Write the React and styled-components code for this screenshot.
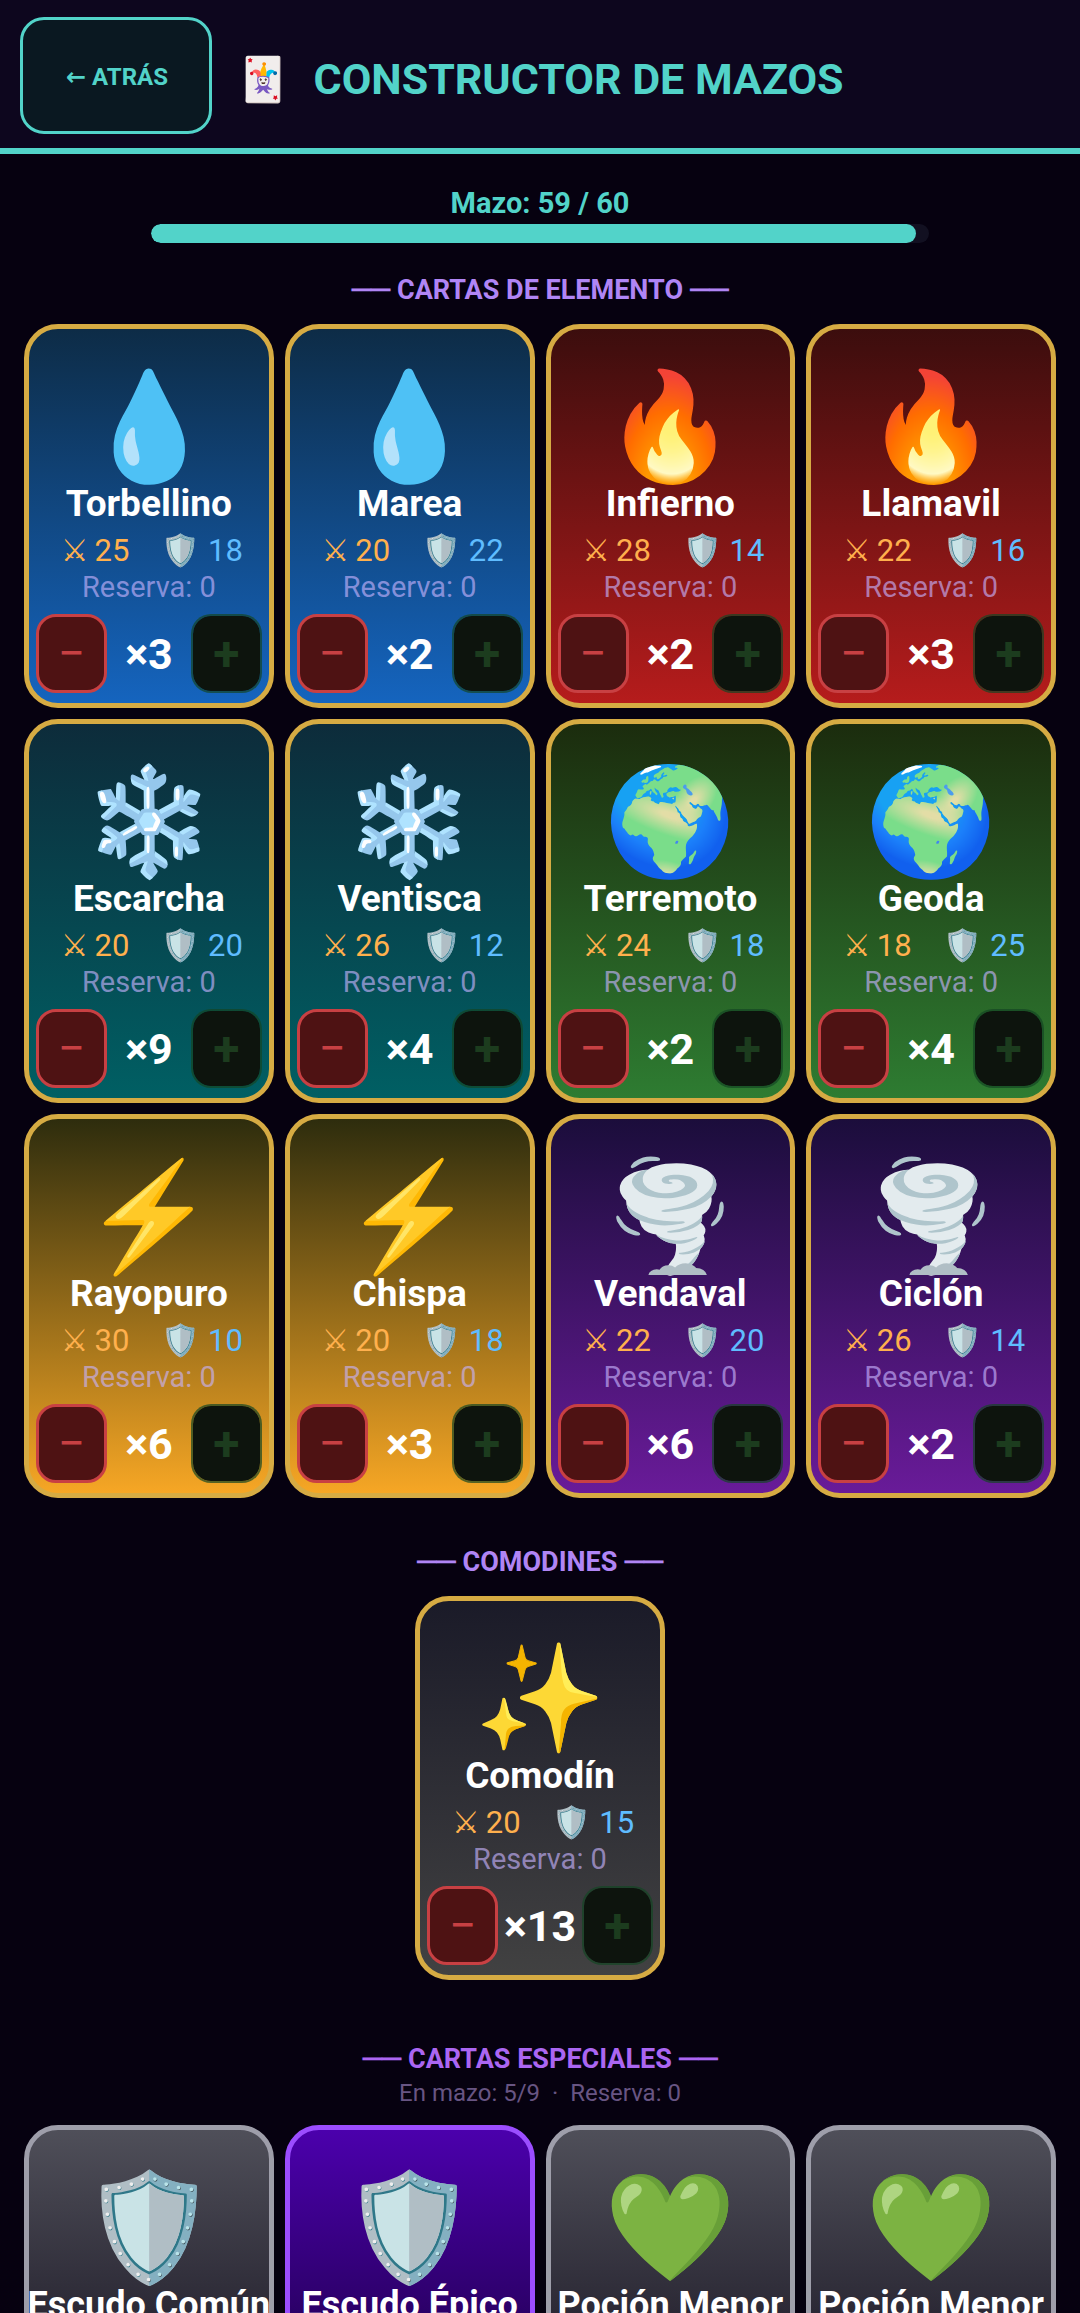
import React from "react";
import styled, { createGlobalStyle, css } from "styled-components";

const TEAL = "#52d3c9";
const GOLD = "#d6ab43";
const DECK_LIMIT = 60;

const GlobalStyle = createGlobalStyle`
  *, *::before, *::after { box-sizing: border-box; }
  body {
    margin: 0;
    background: #060110;
    color: #fff;
    font-family: Roboto, "DejaVu Sans", sans-serif;
  }
  h1, h2, h3, p { margin: 0; }
`;

const Page = styled.div`
  display: flex;
  flex-direction: column;
  height: 100vh;
`;

const Header = styled.header`
  display: flex;
  align-items: center;
  gap: 24px;
  flex: none;
  padding: 17px 20px 14px;
  background: #0d061e;
  border-bottom: 6px solid ${TEAL};
`;

const BackButton = styled.button`
  flex: none;
  width: 192px;
  height: 117px;
  padding: 2px 0 0 2px;
  border: 3px solid ${TEAL};
  border-radius: 24px;
  background: #0a1821;
  color: ${TEAL};
  font: 700 24px/28px Roboto, "DejaVu Sans", sans-serif;
  cursor: pointer;
`;

const Title = styled.h1`
  display: flex;
  align-items: center;
  gap: 24px;
  padding-top: 6px;
  color: ${TEAL};
  font-size: 43px;
  line-height: 50px;
  font-weight: 700;
`;

const Emoji = styled.span`
  font-family: "Noto Color Emoji", sans-serif;
  font-weight: 400;
`;

const Content = styled.main`
  flex: 1;
  min-height: 0;
  overflow-y: auto;
  scrollbar-width: none;
  padding: 31px 24px 24px;
`;

const DeckStatus = styled.div`
  display: flex;
  flex-direction: column;
  align-items: center;
  gap: 3px;
  margin: 0 -24px 31px;
  color: ${TEAL};
  font-size: 29px;
  line-height: 36px;
  font-weight: 700;
`;

const Track = styled.div`
  width: 72%;
  height: 19px;
  border-radius: 10px;
  background: #121021;
  overflow: hidden;
`;

const Fill = styled.div`
  height: 100%;
  border-radius: 10px;
  background: ${TEAL};
`;

const Section = styled.section`
  margin-bottom: ${(p) => (p.$spacious ? 63 : 48)}px;
`;

const SectionTitle = styled.h2`
  display: flex;
  align-items: center;
  justify-content: center;
  gap: 7px;
  color: ${(p) => (p.$vivid ? "#ab66f2" : "#b085f5")};
  font-size: 27px;
  line-height: 32px;
  font-weight: 700;
`;

const Dashes = styled.span`
  font-size: 32px;
`;

const SectionNote = styled.p`
  margin-top: 4px;
  color: #685583;
  font-size: 24px;
  line-height: 28px;
  text-align: center;
  white-space: pre;
`;

const CardGrid = styled.div`
  display: flex;
  flex-wrap: wrap;
  justify-content: center;
  gap: 11px;
  margin-top: 18px;
`;

const themes = {
  water: ["#0d2b45", "#1565c0", GOLD],
  fire: ["#3a0d0d", "#b71c1c", GOLD],
  ice: ["#0d2b3a", "#006064", GOLD],
  earth: ["#1b2b0d", "#2e7d32", GOLD],
  bolt: ["#2b2b0d", "#f9a825", GOLD],
  wind: ["#1a0d3a", "#6a1b9a", GOLD],
  wild: ["#1a1a28", "#424242", GOLD],
  common: ["#50505a", "#05000f", "#9e9eaa"],
  epic: ["#4c00ae", "#0a0020", "#9b4dff"],
};

const Card = styled.article`
  display: flex;
  flex-direction: column;
  align-items: center;
  flex: none;
  width: calc((100% - 33px) / 4);
  min-height: 384px;
  padding: 40px 7px 10px;
  overflow: hidden;
  white-space: nowrap;
  border-radius: 34px;
  ${(p) => {
    const [top, bottom, edge] = themes[p.$theme];
    return css`
      border: 5px solid ${edge};
      background: linear-gradient(180deg, ${top}, ${bottom});
      background-origin: border-box;
    `;
  }}
`;

const CardIcon = styled(Emoji)`
  height: 116px;
  font-size: 106px;
  line-height: 116px;
`;

const CardName = styled.h3`
  font-size: ${(p) => (p.$compact ? 36 : 37)}px;
  line-height: 38px;
  font-weight: 700;
`;

const Stats = styled.div`
  display: flex;
  justify-content: center;
  gap: 32px;
  height: 36px;
  margin-top: 10px;
  padding-left: 6px;
  font-size: 31px;
  line-height: 36px;
`;

const Stat = styled.span`
  display: flex;
  gap: ${(p) => (p.$kind === "attack" ? 6 : 8)}px;
  color: ${(p) => (p.$kind === "attack" ? "#ffb04d" : "#5fbcff")};
`;

const Reserve = styled.p`
  color: rgba(200, 180, 255, 0.65);
  font-size: 29px;
  line-height: 36px;
`;

const Controls = styled.div`
  display: flex;
  align-items: center;
  justify-content: space-between;
  align-self: stretch;
  margin-top: 9px;
`;

const StepButton = styled.button`
  flex: none;
  width: 71px;
  height: 79px;
  padding: 0;
  border: 3px solid #c84043;
  border-radius: 20px;
  background: #4e1213;
  color: #c84043;
  font: 400 48px/48px Roboto, sans-serif;
  cursor: pointer;

  &:disabled {
    border: 2px solid rgba(20, 70, 35, 0.7);
    background: #0d140d;
    background-clip: padding-box;
    color: #1c3c1e;
    font-weight: 700;
    cursor: default;
  }
`;

const Count = styled.span`
  font-size: 43px;
  line-height: 48px;
  font-weight: 700;
`;

const elementCards = [
  ["💧", "Torbellino", 25, 18, 3, "water"],
  ["💧", "Marea", 20, 22, 2, "water"],
  ["🔥", "Infierno", 28, 14, 2, "fire"],
  ["🔥", "Llamavil", 22, 16, 3, "fire"],
  ["❄️", "Escarcha", 20, 20, 9, "ice"],
  ["❄️", "Ventisca", 26, 12, 4, "ice"],
  ["🌍", "Terremoto", 24, 18, 2, "earth"],
  ["🌍", "Geoda", 18, 25, 4, "earth"],
  ["⚡", "Rayopuro", 30, 10, 6, "bolt"],
  ["⚡", "Chispa", 20, 18, 3, "bolt"],
  ["🌪️", "Vendaval", 22, 20, 6, "wind"],
  ["🌪️", "Ciclón", 26, 14, 2, "wind"],
];

const wildCards = [["✨", "Comodín", 20, 15, 13, "wild"]];

const specialCards = [
  ["🛡️", "Escudo Común", "common"],
  ["🛡️", "Escudo Épico", "epic"],
  ["💚", "Poción Menor", "common"],
  ["💚", "Poción Menor", "common"],
];

function Heading({ children, vivid }) {
  return (
    <SectionTitle $vivid={vivid}>
      <Dashes>──</Dashes>
      <span>{children}</span>
      <Dashes>──</Dashes>
    </SectionTitle>
  );
}

function DeckCard({ card }) {
  const [icon, name, attack, defense, count, theme] = card;
  return (
    <Card $theme={theme}>
      <CardIcon>{icon}</CardIcon>
      <CardName>{name}</CardName>
      <Stats>
        <Stat $kind="attack">
          <span>⚔</span>
          <span>{attack}</span>
        </Stat>
        <Stat $kind="defense">
          <Emoji>🛡️</Emoji>
          <span>{defense}</span>
        </Stat>
      </Stats>
      <Reserve>Reserva: 0</Reserve>
      <Controls>
        <StepButton type="button">−</StepButton>
        <Count>×{count}</Count>
        <StepButton type="button" disabled>+</StepButton>
      </Controls>
    </Card>
  );
}

export default function App() {
  const total = 59;
  return (
    <Page>
      <GlobalStyle />
      <Header>
        <BackButton type="button">← ATRÁS</BackButton>
        <Title>
          <Emoji>🃏</Emoji>
          <span>CONSTRUCTOR DE MAZOS</span>
        </Title>
      </Header>
      <Content>
        <DeckStatus>
          <span id="deck-total">Mazo: {total} / {DECK_LIMIT}</span>
          <Track
            role="progressbar"
            aria-labelledby="deck-total"
            aria-valuenow={total}
            aria-valuemax={DECK_LIMIT}
          >
            <Fill style={{ width: `${(total / DECK_LIMIT) * 100}%` }} />
          </Track>
        </DeckStatus>

        <Section>
          <Heading>CARTAS DE ELEMENTO</Heading>
          <CardGrid>
            {elementCards.map((card) => (
              <DeckCard key={card[1]} card={card} />
            ))}
          </CardGrid>
        </Section>

        <Section $spacious>
          <Heading>COMODINES</Heading>
          <CardGrid>
            {wildCards.map((card) => (
              <DeckCard key={card[1]} card={card} />
            ))}
          </CardGrid>
        </Section>

        <Section>
          <Heading vivid>CARTAS ESPECIALES</Heading>
          <SectionNote>{"En mazo: 5/9  ·  Reserva: 0"}</SectionNote>
          <CardGrid>
            {specialCards.map(([icon, name, theme], index) => (
              <Card key={index} $theme={theme}>
                <CardIcon>{icon}</CardIcon>
                <CardName $compact>{name}</CardName>
              </Card>
            ))}
          </CardGrid>
        </Section>
      </Content>
    </Page>
  );
}
